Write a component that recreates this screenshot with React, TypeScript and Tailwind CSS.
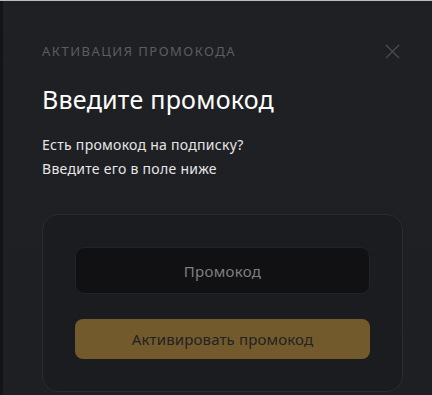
import React from 'react';

export default function App() {
  return (
    <div className="w-[432px] h-[395px] overflow-hidden bg-[#141517] flex flex-col" style={{ fontFamily: '"Noto Sans", "Open Sans", sans-serif' }}>
      <div className="h-px bg-[#bdbdbd]" />
      <div className="flex flex-1">
        <div className="w-[3px] bg-[#141416]" />
        <div className="flex-1 bg-gradient-to-b from-[#1f2024] to-[#1e1f23] pl-[39px] pr-[31px] flex flex-col">
          <div className="flex items-center justify-between mt-[40px]">
            <span className="text-[13px] tracking-[0.115em] text-[#5c5d61] leading-[20px]">АКТИВАЦИЯ ПРОМОКОДА</span>
            <button className="w-[18px] h-[18px] flex items-center justify-center text-[#4b4c50]">
              <svg width="15" height="15" viewBox="0 0 15 15" fill="none" stroke="currentColor" strokeWidth="1.3">
                <path d="M1 1L14 14M14 1L1 14" />
              </svg>
            </button>
          </div>
          <h1 className="mt-[21px] text-[25px] tracking-[0.01em] leading-[34px] text-white">Введите промокод</h1>
          <p className="mt-[17px] text-[14px] tracking-[0.02em] leading-[24px] text-[#e6e6e6]">
            Есть промокод на подписку?
            <br />
            Введите его в поле ниже
          </p>
          <div className="mt-[33px] mr-[-2px] rounded-[16px] border border-[#2a2b30] bg-[#1b1c1f] px-[32px] pt-[32px] pb-[32px]">
            <input
              placeholder="Промокод"
              className="w-full h-[47px] rounded-[9px] border border-[#222327] bg-[#111113] text-center text-[15px] tracking-[0.02em] text-white placeholder-[#7d7e82] outline-none"
            />
            <button className="mt-[25px] w-full h-[40px] rounded-[8px] bg-[#735a2d] text-[15px] tracking-[0.01em] text-[#222]">
              Активировать промокод
            </button>
          </div>
        </div>
      </div>
    </div>
  );
}
